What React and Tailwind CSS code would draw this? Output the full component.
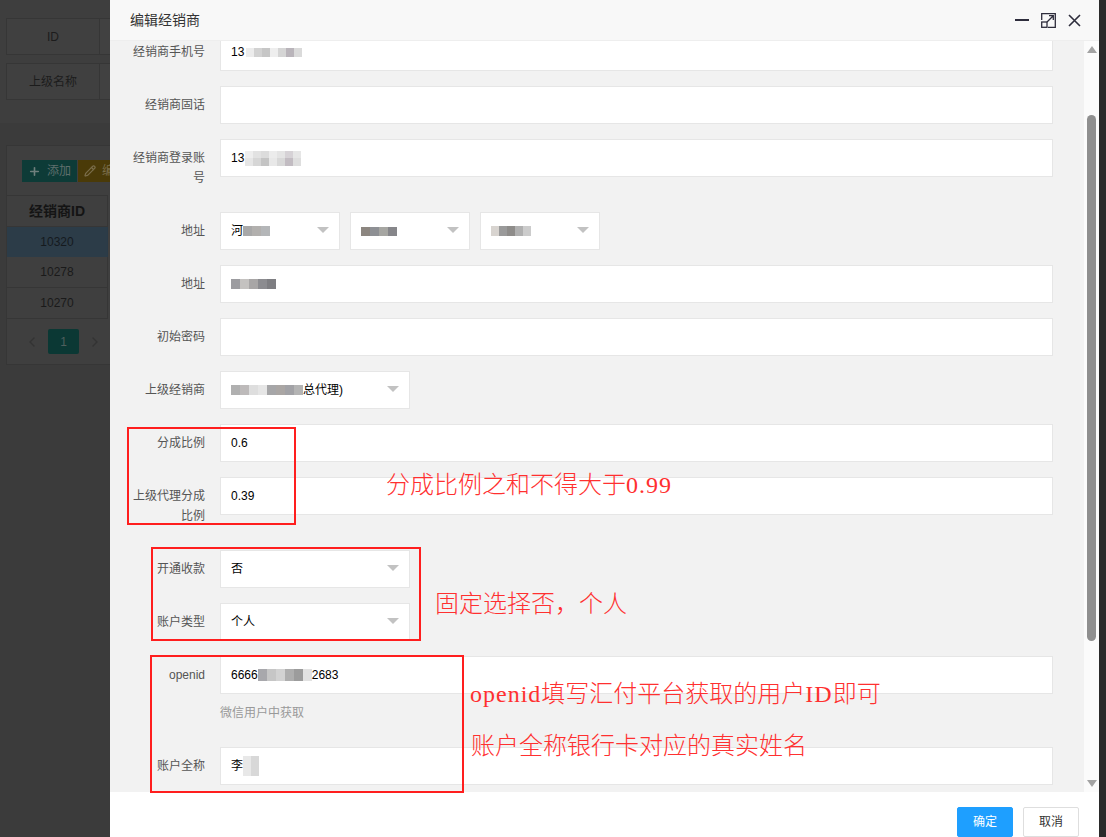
import { useLayoutEffect, useRef } from 'react';
import { ChevronLeft, ChevronRight, Plus, Pencil } from 'lucide-react';

// mosaic blocks standing in for the blurred values
const PHONE = ['bg-[#ececec]', 'bg-[#d2d2d2]', 'bg-[#c6c6c6]', 'bg-[#eeeeee]', 'bg-[#d5d5d5]', 'bg-[#b9b4ba]', 'bg-[#dadada]'];
const LOGIN_TOP = ['bg-[#eeeeee]', 'bg-[#e2e2e2]', 'bg-[#dcdcdc]', 'bg-[#ececec]', 'bg-[#e4e4e4]', 'bg-[#d6d2d6]', 'bg-[#e6e6e6]'];
const LOGIN_BOT = ['bg-[#e6e6e6]', 'bg-[#d6d6d6]', 'bg-[#c4c4c4]', 'bg-[#e8e8e8]', 'bg-[#d8d8d8]', 'bg-[#c2bcc2]', 'bg-[#dedede]'];
const PROV = ['bg-[#a8a8a8]', 'bg-[#b2b0ae]', 'bg-[#b4b6b8]'];
const CITY = ['bg-[#8c8680]', 'bg-[#8e9094]', 'bg-[#a6a6a2]', 'bg-[#86868a]'];
const AREA = ['bg-[#d8d4d0]', 'bg-[#9a9a9a]', 'bg-[#8e8c8a]', 'bg-[#b0b0b0]', 'bg-[#cccccc]'];
const STREET = ['bg-[#9c9ca0]', 'bg-[#c4c2c0]', 'bg-[#a8a6a6]', 'bg-[#8c8c90]', 'bg-[#7e7e82]'];
const PARENT = ['bg-[#b0b0b0]', 'bg-[#bdbaba]', 'bg-[#dedede]', 'bg-[#e6e6e6]', 'bg-[#a6a6a8]', 'bg-[#aaa6a4]', 'bg-[#a2a2a6]', 'bg-[#b4b4b4]'];
const OPENID = ['bg-[#a8a8ac]', 'bg-[#c6c6c6]', 'bg-[#d2d2d2]', 'bg-[#aeaeae]', 'bg-[#9c9c9c]', 'bg-[#e2e2e2]'];
const NAME = ['bg-[#e8e8e8]', 'bg-[#d8d8d8]'];

const Mosaic = ({ cells, cell = 'w-[9px] h-[9px]' }) => (
  <span className="inline-flex">
    {cells.map((c, i) => (
      <span key={i} className={`${cell} ${c}`} />
    ))}
  </span>
);

const Item = ({ label, children, aux }) => (
  <div className="mb-[15px] flex">
    <label className="w-[110px] shrink-0 px-[15px] py-[9px] text-right text-[12px] leading-5 text-[#555]">{label}</label>
    <div className="min-w-0 flex-1">
      {children}
      {aux && <div className="py-[9px] text-[12px] leading-5 text-[#999]">{aux}</div>}
    </div>
  </div>
);

const Box = ({ children }) => (
  <div className="flex h-[38px] items-center border border-[#e6e6e6] bg-white pl-[10px] text-[12px] text-black">{children}</div>
);

const Select = ({ className, children }) => (
  <div className={`flex h-[38px] items-center justify-between border border-[#e6e6e6] bg-white px-[10px] text-[12px] text-black ${className}`}>
    <span className="flex items-center">{children}</span>
    <span className="mb-[2px] h-0 w-0 border-x-[6px] border-t-[6px] border-x-transparent border-t-[#c2c2c2]" />
  </div>
);

// half-width latin inside the red notes
const Latin = ({ children }) => <span className="font-[Liberation_Serif,serif] tracking-[1px]">{children}</span>;

const MaxIcon = () => (
  <svg width="15" height="15" viewBox="0 0 15 15" fill="none" stroke="#2e2d3c" strokeWidth="1.3">
    <path d="M0.7 7V0.7H14.3V14.3H7" />
    <rect x="0.7" y="9" width="5.3" height="5.3" />
    <path d="M6 9L12.3 2.7M8 2.7H12.3V7" />
  </svg>
);

const CloseIcon = () => (
  <svg width="13" height="13" viewBox="0 0 13 13" stroke="#2e2d3c" strokeWidth="1.6">
    <path d="M1 1L12 12M12 1L1 12" />
  </svg>
);

const BackgroundPage = () => (
  <div className="flex h-full">
    <div className="flex-1 bg-[#3b3b3b]">
      <div className="flex flex-col gap-[8px] bg-[#3e3e3e] px-[6px] pb-[23px] pt-[18px]">
        {['ID', '上级名称'].map((t) => (
          <div key={t} className="flex h-[37px]">
            <div className="flex w-[94px] items-center justify-center border border-[#363636] bg-[#404040] text-[12px] text-[#1c1c1c]">{t}</div>
            <div className="flex-1 border border-l-0 border-[#363636] bg-[#414141]" />
          </div>
        ))}
      </div>
      <div className="mx-[6px] mt-[22px] border border-[#363636] bg-[#3f3f3f]">
        <div className="flex px-[15px] pb-[13px] pt-[14px]">
          <div className="flex h-[22px] items-center gap-[6px] bg-[#0d3b37] px-[6px] text-[12px] text-[#5f6f6d]">
            <Plus size={13} strokeWidth={3} className="text-[#6f7f7d]" />
            添加
          </div>
          <div className="ml-[1px] flex h-[22px] items-center gap-[6px] bg-[#4a3a08] px-[6px] text-[12px] text-[#7a6d4a]">
            <Pencil size={12} strokeWidth={2.5} />
            编辑
          </div>
        </div>
        <div className="w-[101px] text-center">
          <div className="flex h-[32px] items-center justify-center border-y border-r border-[#363636] text-[14px] font-bold text-[#141414]">经销商ID</div>
          <div className="flex h-[30px] items-center justify-center border-r border-[#2a3a46] bg-[#2c3c48] text-[12px] text-[#151a1e]">10320</div>
          <div className="flex h-[31px] items-center justify-center border-b border-r border-[#363636] text-[12px] text-[#1a1a1a]">10278</div>
          <div className="flex h-[31px] items-center justify-center border-b border-r border-[#363636] text-[12px] text-[#1a1a1a]">10270</div>
        </div>
        <div className="flex h-[45px] items-center gap-[8px] pl-[17px]">
          <ChevronLeft size={16} className="text-[#333]" />
          <div className="flex h-[25px] w-[31px] items-center justify-center rounded-[2px] bg-[#0b3834] text-[12px] text-[#4f5f5d]">1</div>
          <ChevronRight size={16} className="text-[#333]" />
        </div>
      </div>
    </div>
    <div className="w-[7px] bg-[#2a2a2a]" />
  </div>
);

export default function App() {
  const bodyRef = useRef(null);

  useLayoutEffect(() => {
    // dialog body is scrolled down by one field
    if (bodyRef.current) bodyRef.current.scrollTop = 81;
  }, []);

  return (
    <div className="relative h-screen w-full overflow-hidden font-[Liberation_Sans,Noto_Sans_CJK_SC,sans-serif]">
      <BackgroundPage />

      {/* dialog */}
      <div className="absolute left-[110px] top-0 flex w-[989px] flex-col bg-white">
        <div className="flex h-[41px] items-center border-b border-[#eeeeee] bg-[#f8f8f8] pl-[20px] pr-[18px]">
          <span className="text-[14px] text-[#333]">编辑经销商</span>
          <div className="ml-auto flex items-center">
            <span className="h-[2px] w-[14px] bg-[#2e2d3c]" />
            <span className="ml-[12px] flex"><MaxIcon /></span>
            <span className="ml-[12px] flex"><CloseIcon /></span>
          </div>
        </div>

        <div className="flex h-[751px] bg-[#f2f2f2]">
          <div ref={bodyRef} className="flex-1 overflow-hidden">
            <div className="pb-[20px] pr-[31px] pt-[20px]">
              <Item label="经销商名称"><Box /></Item>
              <Item label="经销商手机号">
                <Box>13<span className="ml-[2px] mt-[1px]"><Mosaic cells={PHONE} cell="w-[8px] h-[9px]" /></span></Box>
              </Item>
              <Item label="经销商固话"><Box /></Item>
              <Item label="经销商登录账号">
                <Box>
                  13
                  <span className="ml-[1px] inline-flex flex-col">
                    <Mosaic cells={LOGIN_TOP} cell="w-[8px] h-[7px]" />
                    <Mosaic cells={LOGIN_BOT} cell="w-[8px] h-[8px]" />
                  </span>
                </Box>
              </Item>
              <Item label="地址">
                <div className="flex gap-[10px]">
                  <Select className="w-[120px]">河<Mosaic cells={PROV} cell="w-[9px] h-[10px]" /></Select>
                  <Select className="w-[120px]"><Mosaic cells={CITY} cell="w-[9px] h-[9px]" /></Select>
                  <Select className="w-[120px]"><Mosaic cells={AREA} cell="w-[8px] h-[10px]" /></Select>
                </div>
              </Item>
              <Item label="地址">
                <Box><Mosaic cells={STREET} cell="w-[9px] h-[10px]" /></Box>
              </Item>
              <Item label="初始密码"><Box /></Item>
              <Item label="上级经销商">
                <Select className="w-[190px]">
                  <Mosaic cells={PARENT} cell="w-[9px] h-[10px]" />
                  总代理)
                </Select>
              </Item>
              <Item label="分成比例">
                <Box>0.6</Box>
              </Item>
              <Item label="上级代理分成比例">
                <Box>0.39</Box>
              </Item>
              <Item label="开通收款">
                <Select className="w-[190px]">否</Select>
              </Item>
              <Item label="账户类型">
                <Select className="w-[190px]">个人</Select>
              </Item>
              <Item label="openid" aux="微信用户中获取">
                <Box>6666<Mosaic cells={OPENID} cell="w-[9px] h-[12px]" />2683</Box>
              </Item>
              <Item label="账户全称">
                <Box>李<Mosaic cells={NAME} cell="w-[8px] h-[20px]" /></Box>
              </Item>
              <Item label="开户银行"><Box /></Item>
              <Item label="银行卡号"><Box /></Item>
              <Item label="身份证号"><Box /></Item>
            </div>
          </div>

          {/* scrollbar */}
          <div className="flex w-[15px] flex-col items-center bg-[#fbfbfb] pb-[5px] pt-[5px]">
            <span className="h-0 w-0 border-x-[5px] border-b-[7px] border-x-transparent border-b-[#a3a3a3]" />
            <span className="mt-[62px] h-[526px] w-[9px] rounded-full bg-[#8f8f8f]" />
            <span className="flex-1" />
            <span className="h-0 w-0 border-x-[5px] border-t-[7px] border-x-transparent border-t-[#a3a3a3]" />
          </div>
        </div>

        <div className="flex justify-end gap-[10px] bg-white pb-[12px] pr-[20px] pt-[15px]">
          <button className="h-[30px] rounded-[2px] border border-[#1e9fff] bg-[#1e9fff] px-[15px] text-[12px] text-white">确定</button>
          <button className="h-[30px] rounded-[2px] border border-[#dedede] bg-white px-[15px] text-[12px] text-[#333]">取消</button>
        </div>
      </div>

      {/* red annotations drawn on top of the screenshot */}
      <div className="pointer-events-none absolute inset-0 font-[Noto_Sans_CJK_SC,sans-serif] text-[24px] font-light leading-6 text-[#ff3030]">
        <div className="absolute left-[127px] top-[427px] h-[98px] w-[169px] border-2 border-[#ff1e1e]" />
        <div className="absolute left-[151px] top-[547px] h-[94px] w-[270px] border-2 border-[#ff1e1e]" />
        <div className="absolute left-[150px] top-[655px] h-[138px] w-[314px] border-2 border-[#ff1e1e]" />
        <div className="absolute left-[386px] top-[471px] whitespace-nowrap">分成比例之和不得大于<Latin>0.99</Latin></div>
        <div className="absolute left-[435px] top-[590px] whitespace-nowrap">固定选择否，个人</div>
        <div className="absolute left-[470px] top-[680px] whitespace-nowrap"><Latin>openid</Latin>填写汇付平台获取的用户<Latin>ID</Latin>即可</div>
        <div className="absolute left-[471px] top-[732px] whitespace-nowrap">账户全称银行卡对应的真实姓名</div>
      </div>
    </div>
  );
}
